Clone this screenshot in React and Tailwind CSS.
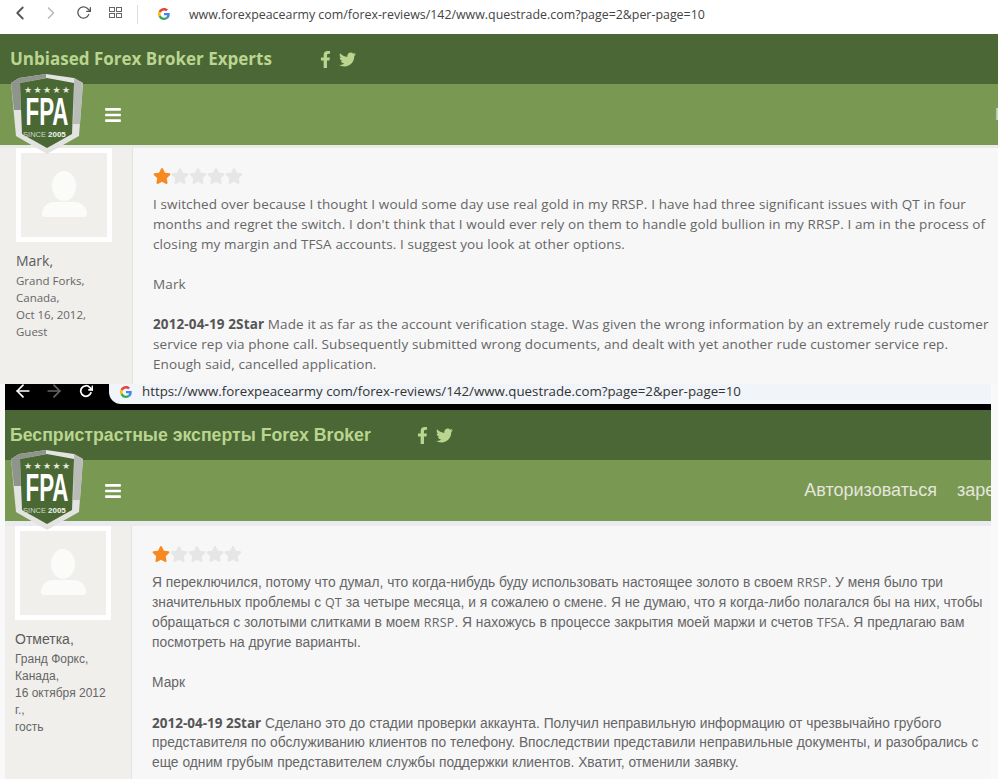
import React from "react";
import { FaFacebookF, FaTwitter, FaBars, FaStar } from "react-icons/fa";
import { FiChevronLeft, FiChevronRight, FiRotateCw, FiArrowLeft, FiArrowRight } from "react-icons/fi";

function GoogleG({ className }) {
  return (
    <svg viewBox="0 0 48 48" className={className}>
      <path fill="#EA4335" d="M24 9.5c3.5 0 6.7 1.2 9.2 3.6l6.9-6.9C35.9 2.4 30.5 0 24 0 14.6 0 6.5 5.4 2.6 13.2l8 6.2C12.500 13.600 17.800 9.500 24 9.500z" />
      <path fill="#4285F4" d="M47 24.500c0-1.600-.1-3.100-.4-4.500H24v9h12.900c-.6 3-2.200 5.500-4.700 7.200l7.700 6C44.400 38 47 31.800 47 24.500z" />
      <path fill="#FBBC05" d="M10.600 28.600c-.5-1.400-.8-3-.8-4.600s.3-3.200.8-4.600l-8-6.200C.9 16.500 0 20.100 0 24s.9 7.500 2.600 10.800l8-6.200z" />
      <path fill="#34A853" d="M24 48c6.500 0 11.900-2.100 15.900-5.800l-7.700-6c-2.200 1.500-5 2.300-8.200 2.300-6.200 0-11.500-4.100-13.400-9.900l-8 6.200C6.500 42.600 14.600 48 24 48z" />
    </svg>
  );
}

function Logo({ className }) {
  return (
    <svg viewBox="0 0 74 80" className={className}>
      <path d="M36 0 L64 4 L73 9 L69 62 L37 80 L6 62 L1 9 L9 4 Z" fill="#e3e4e1" />
      <path d="M1 9 L9 4 L36 0 L36 4 L10 9 L11 36 L4 36 Z" fill="#8f948c" />
      <path d="M64 4 L73 9 L70 50 L63 50 L64 9 Z" fill="#b9bcb6" />
      <path d="M37 4 L64 9 L62 60 L37 74 L12 60 L10 9 Z" fill="#4a6834" />
      <g fill="#e3e9dc" fontSize="9" fontFamily="DejaVu Sans, sans-serif" textAnchor="middle">
        <text x="18" y="19">★</text>
        <text x="27.500" y="19">★</text>
        <text x="37" y="19">★</text>
        <text x="46.500" y="19">★</text>
        <text x="56" y="19">★</text>
      </g>
      <text x="37" y="51" textAnchor="middle" fill="#ffffff" fontSize="38" fontWeight="700" fontFamily="Liberation Sans, sans-serif" textLength="43" lengthAdjust="spacingAndGlyphs">FPA</text>
      <text x="36" y="63" textAnchor="end" fill="#cfd9c6" fontSize="7.500" fontFamily="Liberation Sans, sans-serif">SINCE</text>
      <text x="38" y="63" textAnchor="start" fill="#f0f3ec" fontSize="8" fontWeight="700" fontFamily="Liberation Sans, sans-serif">2005</text>
    </svg>
  );
}

function Avatar() {
  return (
    <div className="w-[96px] h-[94px] border-[5px] border-white bg-[#f0efec] flex flex-col items-center pt-[18px]">
      <div className="w-[24px] h-[30px] rounded-[50%] bg-[#fbfbf9]"></div>
      <div className="w-[45px] h-[15px] rounded-t-[16px] rounded-b-[4px] bg-[#fbfbf9] mt-[1px]"></div>
    </div>
  );
}

function Stars() {
  return (
    <div className="flex text-[18px] h-[18px]">
      <FaStar className="text-[#f6891f]" />
      <FaStar className="text-[#e6e6e6]" />
      <FaStar className="text-[#e6e6e6]" />
      <FaStar className="text-[#e6e6e6]" />
      <FaStar className="text-[#e6e6e6]" />
    </div>
  );
}

function Line({ children }) {
  return <div className="h-[20px] leading-[20px] whitespace-nowrap">{children}</div>;
}

// latin words keep the page's own font in the translated text
function Lat({ children }) {
  return <span className="font-['Open_Sans',sans-serif] text-[12.500px] tracking-[0.2px]">{children}</span>;
}

export default function App() {
  return (
    <div className="w-[998px] h-[779px] overflow-hidden bg-[#f9f9f9]">
      {/* english page */}
      <div className="h-[384px] overflow-hidden relative bg-white">
        <div className="h-[34px] bg-white relative text-[#555]">
          <FiChevronLeft className="absolute left-[9px] top-[2px] text-[22px] text-[#555]" />
          <FiChevronRight className="absolute left-[41px] top-[3px] text-[20px] text-[#bbb]" />
          <FiRotateCw className="absolute left-[76px] top-[5px] text-[15px] text-[#555]" />
          <div className="absolute left-[109px] top-[7px] w-[13px] h-[11px] grid grid-cols-2 gap-[1px]">
            <span className="border border-[#666]"></span>
            <span className="border border-[#666]"></span>
            <span className="border border-[#666]"></span>
            <span className="border border-[#666]"></span>
          </div>
          <div className="absolute left-[137px] top-[5px] w-px h-[19px] bg-[#ddd]"></div>
          <GoogleG className="absolute left-[158px] top-[8px] w-[12px] h-[12px]" />
          <span className="absolute left-[189px] top-[6px] text-[12.400px] leading-[18px] text-[#444] whitespace-nowrap font-['Open_Sans',sans-serif]">www.forexpeacearmy com/forex-reviews/142/www.questrade.com?page=2&amp;per-page=10</span>
        </div>
        <div className="h-[50px] bg-[#4b6735] flex items-center pl-[10px] font-['Open_Sans',sans-serif]">
          <span className="w-[307px] text-[17px] font-bold text-[#bad58f] whitespace-nowrap">Unbiased Forex Broker Experts</span>
          <FaFacebookF className="text-[#bad58f] text-[17px]" />
          <FaTwitter className="text-[#bad58f] text-[17px] ml-[5px]" />
        </div>
        <div className="h-[61px] bg-[#799852] flex items-center pl-[104px] justify-between">
          <FaBars className="text-white text-[18px]" />
          <span className="text-[#d8dccb] text-[16px] w-[3px] overflow-hidden whitespace-nowrap font-['Liberation_Sans',sans-serif]">Log in</span>
        </div>
        <div className="h-[3px] bg-[#e9ebe6]"></div>
        <div className="flex h-[236px] font-['Open_Sans',sans-serif]">
          <div className="w-[133px] shrink-0 bg-[#f0efec] border-r border-[#e2e2e0] pl-[16px] text-[#666]">
            <Avatar />
            <div className="text-[14px] leading-[18px] mt-[10px] text-[#5c5c5c]">Mark,</div>
            <div className="text-[11.500px] leading-[17px] mt-[2px]">
              <div>Grand Forks,</div>
              <div>Canada,</div>
              <div>Oct 16, 2012,</div>
              <div>Guest</div>
            </div>
          </div>
          <div className="flex-1 bg-[#f7f7f8] pl-[20px] pt-[19px] text-[13.500px] tracking-[0.12px] text-[#666]">
            <Stars />
            <div className="mt-[9px]">
              <Line>I switched over because I thought I would some day use real gold in my RRSP. I have had three significant issues with QT in four</Line>
              <Line>months and regret the switch. I don't think that I would ever rely on them to handle gold bullion in my RRSP. I am in the process of</Line>
              <Line>closing my margin and TFSA accounts. I suggest you look at other options.</Line>
              <Line>&nbsp;</Line>
              <Line>Mark</Line>
              <Line>&nbsp;</Line>
              <Line><b className="text-[#555]">2012-04-19 2Star</b> Made it as far as the account verification stage. Was given the wrong information by an extremely rude customer</Line>
              <Line>service rep via phone call. Subsequently submitted wrong documents, and dealt with yet another rude customer service rep.</Line>
              <Line>Enough said, cancelled application.</Line>
            </div>
          </div>
        </div>
        <div className="absolute left-[10px] top-[74px] w-[74px] h-[80px]">
          <Logo className="w-full h-full" />
        </div>
      </div>

      {/* translated page */}
      <div className="h-[395px] overflow-hidden relative ml-[5px] w-[986px] bg-white">
        <div className="h-[26px] bg-black relative">
          <FiArrowLeft className="absolute left-[8px] top-[-3px] text-[20px] text-white" />
          <FiArrowRight className="absolute left-[39px] top-[-3px] text-[20px] text-[#666]" />
          <FiRotateCw className="absolute left-[74px] top-[0px] text-[14px] text-white stroke-[3]" />
          <div className="absolute left-[104px] right-0 top-0 h-[20px] bg-[#f1f4f8] rounded-bl-[12px] flex items-start pl-[11px]">
            <GoogleG className="w-[12px] h-[12px] mt-[2px]" />
            <span className="ml-[10px] text-[13.300px] leading-[14px] text-[#333] whitespace-nowrap font-['Open_Sans',sans-serif]">https://www.forexpeacearmy com/forex-reviews/142/www.questrade.com?page=2&amp;per-page=10</span>
          </div>
        </div>
        <div className="h-[50px] bg-[#4b6735] flex items-center pl-[5px] font-['Liberation_Sans',sans-serif]">
          <span className="w-[404px] text-[17.700px] font-bold text-[#bad58f] whitespace-nowrap">Беспристрастные эксперты Forex Broker</span>
          <FaFacebookF className="text-[#bad58f] text-[17px]" />
          <FaTwitter className="text-[#bad58f] text-[17px] ml-[5px]" />
        </div>
        <div className="h-[61px] bg-[#799852] flex items-center pl-[99px] font-['Liberation_Sans',sans-serif]">
          <FaBars className="text-white text-[18px]" />
          <span className="ml-auto text-[#e4e6dc] text-[18px] whitespace-nowrap">Авторизоваться</span>
          <span className="ml-[20px] w-[34px] overflow-hidden whitespace-nowrap text-[#e4e6dc] text-[18px]">зарегистрироваться</span>
        </div>
        <div className="h-[5px] bg-[#e9ebee]"></div>
        <div className="flex h-[253px] font-['Liberation_Sans',sans-serif]">
          <div className="w-[127px] shrink-0 bg-[#f0efec] border-r border-[#e2e2e0] pl-[10px] text-[#666]">
            <Avatar />
            <div className="text-[14px] leading-[18px] mt-[10px] text-[#5c5c5c]">Отметка,</div>
            <div className="text-[12px] leading-[17px] mt-[3px]">
              <div>Гранд Форкс,</div>
              <div>Канада,</div>
              <div>16 октября 2012</div>
              <div>г.,</div>
              <div>гость</div>
            </div>
          </div>
          <div className="flex-1 bg-[#f7f7f8] pl-[20px] pt-[19px] text-[13.800px] text-[#666]">
            <Stars />
            <div className="mt-[10px]">
              <Line>Я переключился, потому что думал, что когда-нибудь буду использовать настоящее золото в своем <Lat>RRSP</Lat>. У меня было три</Line>
              <Line>значительных проблемы с <Lat>QT</Lat> за четыре месяца, и я сожалею о смене. Я не думаю, что я когда-либо полагался бы на них, чтобы</Line>
              <Line>обращаться с золотыми слитками в моем <Lat>RRSP</Lat>. Я нахожусь в процессе закрытия моей маржи и счетов <Lat>TFSA</Lat>. Я предлагаю вам</Line>
              <Line>посмотреть на другие варианты.</Line>
              <Line>&nbsp;</Line>
              <Line>Марк</Line>
              <Line>&nbsp;</Line>
              <Line><b className="text-[#555] font-['Open_Sans',sans-serif] text-[13.500px]">2012-04-19 2Star</b> Сделано это до стадии проверки аккаунта. Получил неправильную информацию от чрезвычайно грубого</Line>
              <Line>представителя по обслуживанию клиентов по телефону. Впоследствии представили неправильные документы, и разобрались с</Line>
              <Line>еще одним грубым представителем службы поддержки клиентов. Хватит, отменили заявку.</Line>
            </div>
          </div>
        </div>
        <div className="absolute left-[5px] top-[66px] w-[74px] h-[80px]">
          <Logo className="w-full h-full" />
        </div>
      </div>
    </div>
  );
}
